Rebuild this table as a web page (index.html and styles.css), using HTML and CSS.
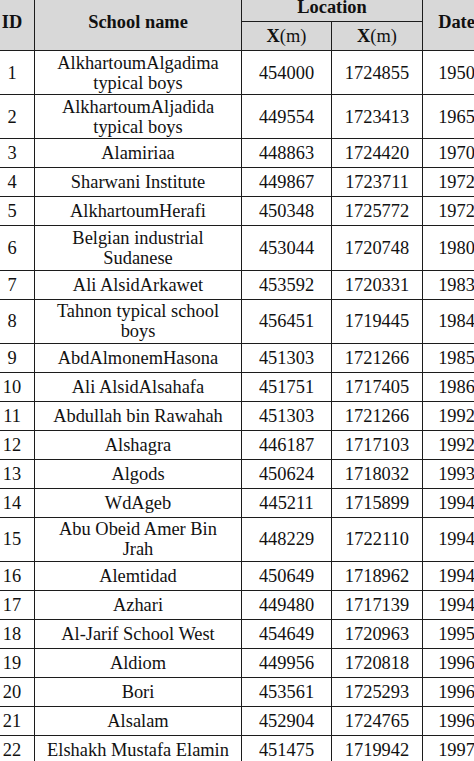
FILE: index.html
```html
<!DOCTYPE html>
<html>
<head>
<meta charset="utf-8">
<link rel="stylesheet" href="styles.css">
</head>
<body>
<div class="page">
<table class="schools">
  <colgroup>
    <col class="c-id"><col class="c-name"><col class="c-x"><col class="c-y"><col class="c-date">
  </colgroup>
  <thead>
    <tr class="h1">
      <th rowspan="2">ID</th>
      <th rowspan="2">School name</th>
      <th colspan="2">Location</th>
      <th rowspan="2">Date</th>
    </tr>
    <tr class="h2">
      <th><b>X</b><span class="unit">(m)</span></th>
      <th><b>X</b><span class="unit">(m)</span></th>
    </tr>
  </thead>
  <tbody>
    <tr class="d"><td>1</td><td>AlkhartoumAlgadima<br>typical boys</td><td>454000</td><td>1724855</td><td>1950</td></tr>
    <tr class="d"><td>2</td><td>AlkhartoumAljadida<br>typical boys</td><td>449554</td><td>1723413</td><td>1965</td></tr>
    <tr><td>3</td><td>Alamiriaa</td><td>448863</td><td>1724420</td><td>1970</td></tr>
    <tr><td>4</td><td>Sharwani Institute</td><td>449867</td><td>1723711</td><td>1972</td></tr>
    <tr><td>5</td><td>AlkhartoumHerafi</td><td>450348</td><td>1725772</td><td>1972</td></tr>
    <tr class="d"><td>6</td><td>Belgian industrial<br>Sudanese</td><td>453044</td><td>1720748</td><td>1980</td></tr>
    <tr><td>7</td><td>Ali AlsidArkawet</td><td>453592</td><td>1720331</td><td>1983</td></tr>
    <tr class="d"><td>8</td><td>Tahnon typical school<br>boys</td><td>456451</td><td>1719445</td><td>1984</td></tr>
    <tr><td>9</td><td>AbdAlmonemHasona</td><td>451303</td><td>1721266</td><td>1985</td></tr>
    <tr><td>10</td><td>Ali AlsidAlsahafa</td><td>451751</td><td>1717405</td><td>1986</td></tr>
    <tr><td>11</td><td>Abdullah bin Rawahah</td><td>451303</td><td>1721266</td><td>1992</td></tr>
    <tr><td>12</td><td>Alshagra</td><td>446187</td><td>1717103</td><td>1992</td></tr>
    <tr><td>13</td><td>Algods</td><td>450624</td><td>1718032</td><td>1993</td></tr>
    <tr><td>14</td><td>WdAgeb</td><td>445211</td><td>1715899</td><td>1994</td></tr>
    <tr class="d"><td>15</td><td>Abu Obeid Amer Bin<br>Jrah</td><td>448229</td><td>1722110</td><td>1994</td></tr>
    <tr><td>16</td><td>Alemtidad</td><td>450649</td><td>1718962</td><td>1994</td></tr>
    <tr><td>17</td><td>Azhari</td><td>449480</td><td>1717139</td><td>1994</td></tr>
    <tr><td>18</td><td>Al-Jarif School West</td><td>454649</td><td>1720963</td><td>1995</td></tr>
    <tr><td>19</td><td>Aldiom</td><td>449956</td><td>1720818</td><td>1996</td></tr>
    <tr><td>20</td><td>Bori</td><td>453561</td><td>1725293</td><td>1996</td></tr>
    <tr><td>21</td><td>Alsalam</td><td>452904</td><td>1724765</td><td>1996</td></tr>
    <tr><td>22</td><td>Elshakh Mustafa Elamin</td><td>451475</td><td>1719942</td><td>1997</td></tr>
  </tbody>
</table>
</div>
</body>
</html>
```

FILE: styles.css
```css
html, body {
  margin: 0;
  padding: 0;
  background: #ffffff;
}
.page {
  width: 474px;
  height: 761px;
  overflow: hidden;
}
.schools {
  margin: -8px 0 0 -11px;
  border-collapse: collapse;
  table-layout: fixed;
  width: 501px;
  font-family: "Liberation Serif", "Times New Roman", serif;
  font-size: 18.4px;
  color: #111;
}
.c-id { width: 45px; }
.c-name { width: 207px; }
.c-x { width: 90px; }
.c-y { width: 91px; }
.c-date { width: 68px; }
.schools th,
.schools td {
  border: 1px solid #1c1c1c;
  padding: 0;
  text-align: center;
  vertical-align: middle;
  line-height: 20px;
}
.schools th {
  background: #d8d8d8;
  font-weight: bold;
}
.schools .h1 th,
.schools .h2 th {
  height: 28px;
}
.unit {
  font-weight: normal;
}
.schools tbody td {
  height: 28px;
}
.schools tbody tr.d td {
  height: 43.2px;
}
```
